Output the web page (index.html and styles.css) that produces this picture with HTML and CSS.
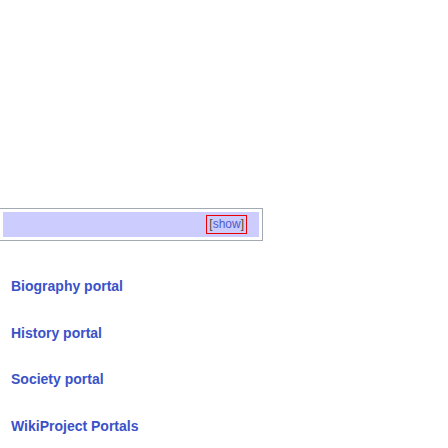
FILE: index.html
```html
<!DOCTYPE html>
<html>
<head>
<meta charset="utf-8">
<link rel="stylesheet" href="styles.css">
</head>
<body>
<div class="navbox">
  <div class="navbox-title">
    <span class="toggle"><span class="bracket">[</span><a class="toggle-link" href="#">show</a><span class="bracket">]</span></span>
  </div>
</div>
<ul class="portals">
  <li><a href="#">Biography portal</a></li>
  <li><a href="#">History portal</a></li>
  <li><a href="#">Society portal</a></li>
  <li><a href="#">WikiProject Portals</a></li>
</ul>
</body>
</html>
```
FILE: styles.css
```css
html, body {
  margin: 0;
  padding: 0;
  background: #ffffff;
}
body {
  font-family: "Liberation Sans", Arial, sans-serif;
}
.navbox {
  margin-top: 208px;
  margin-left: -1px;
  width: 256px;
  border: 1px solid #a2a9b1;
  padding: 3px;
}
.navbox-title {
  height: 25px;
  background: #ccccff;
  display: flex;
  align-items: center;
  justify-content: flex-end;
  padding-right: 12px;
}
.toggle {
  display: inline-flex;
  align-items: center;
  height: 17px;
  padding: 0 2px;
  border: 1px solid #ee0000;
  font-size: 12px;
  line-height: 17px;
}
.bracket {
  color: #5c4a1e;
}
.toggle-link {
  color: #4a5fc8;
  text-decoration: none;
}
.portals {
  list-style: none;
  margin: 37px 0 0 0;
  padding: 0 0 0 11px;
  display: flex;
  flex-direction: column;
  gap: 29.7px;
}
.portals li {
  line-height: 17px;
  font-size: 14px;
  font-weight: bold;
}
.portals a {
  color: #3a52c8;
  text-decoration: none;
}
```
